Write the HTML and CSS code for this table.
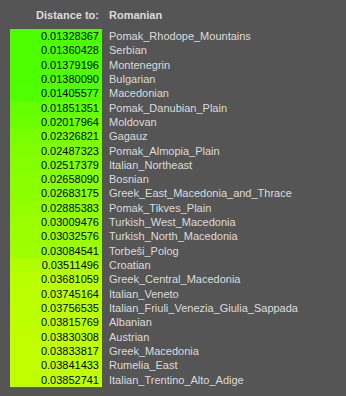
FILE: index.html
```html
<!DOCTYPE html>
<html>
<head>
<meta charset="utf-8">
<link rel="stylesheet" href="styles.css">
</head>
<body>
<div class="dist">
  <div class="hdr num">Distance to:</div>
  <div class="hdr name">Romanian</div>

  <div class="val" style="background:rgb(76,255,0)">0.01328367</div><div class="name">Pomak_Rhodope_Mountains</div>
  <div class="val" style="background:rgb(77,255,0)">0.01360428</div><div class="name">Serbian</div>
  <div class="val" style="background:rgb(78,255,0)">0.01379196</div><div class="name">Montenegrin</div>
  <div class="val" style="background:rgb(78,255,0)">0.01380090</div><div class="name">Bulgarian</div>
  <div class="val" style="background:rgb(80,255,0)">0.01405577</div><div class="name">Macedonian</div>
  <div class="val" style="background:rgb(100,255,0)">0.01851351</div><div class="name">Pomak_Danubian_Plain</div>
  <div class="val" style="background:rgb(108,255,0)">0.02017964</div><div class="name">Moldovan</div>
  <div class="val" style="background:rgb(122,255,0)">0.02326821</div><div class="name">Gagauz</div>
  <div class="val" style="background:rgb(129,255,0)">0.02487323</div><div class="name">Pomak_Almopia_Plain</div>
  <div class="val" style="background:rgb(131,255,0)">0.02517379</div><div class="name">Italian_Northeast</div>
  <div class="val" style="background:rgb(137,255,0)">0.02658090</div><div class="name">Bosnian</div>
  <div class="val" style="background:rgb(138,255,0)">0.02683175</div><div class="name">Greek_East_Macedonia_and_Thrace</div>
  <div class="val" style="background:rgb(148,255,0)">0.02885383</div><div class="name">Pomak_Tikves_Plain</div>
  <div class="val" style="background:rgb(153,255,0)">0.03009476</div><div class="name">Turkish_West_Macedonia</div>
  <div class="val" style="background:rgb(154,255,0)">0.03032576</div><div class="name">Turkish_North_Macedonia</div>
  <div class="val" style="background:rgb(157,255,0)">0.03084541</div><div class="name">Torbeši_Polog</div>
  <div class="val" style="background:rgb(176,255,0)">0.03511496</div><div class="name">Croatian</div>
  <div class="val" style="background:rgb(184,255,0)">0.03681059</div><div class="name">Greek_Central_Macedonia</div>
  <div class="val" style="background:rgb(187,255,0)">0.03745164</div><div class="name">Italian_Veneto</div>
  <div class="val" style="background:rgb(188,255,0)">0.03756535</div><div class="name">Italian_Friuli_Venezia_Giulia_Sappada</div>
  <div class="val" style="background:rgb(190,255,0)">0.03815769</div><div class="name">Albanian</div>
  <div class="val" style="background:rgb(191,255,0)">0.03830308</div><div class="name">Austrian</div>
  <div class="val" style="background:rgb(191,255,0)">0.03833817</div><div class="name">Greek_Macedonia</div>
  <div class="val" style="background:rgb(191,255,0)">0.03841433</div><div class="name">Rumelia_East</div>
  <div class="val" style="background:rgb(192,255,0)">0.03852741</div><div class="name">Italian_Trentino_Alto_Adige</div>
</div>
</body>
</html>
```
FILE: styles.css
```css
html, body {
  margin: 0;
  background: #555555;
}
body {
  padding: 8px 0 0 10px;
  font-family: "Liberation Sans", Arial, sans-serif;
  font-size: 11px;
  color: #dcdcdc;
}
.dist {
  display: grid;
  grid-template-columns: 92px auto;
  grid-template-rows: 21px;
  grid-auto-rows: 14.32px;
  column-gap: 7px;
  line-height: 14.32px;
  white-space: nowrap;
}
.hdr {
  font-weight: bold;
}
.num, .val {
  text-align: right;
  padding-right: 3px;
}
.val {
  color: #000;
}
```
